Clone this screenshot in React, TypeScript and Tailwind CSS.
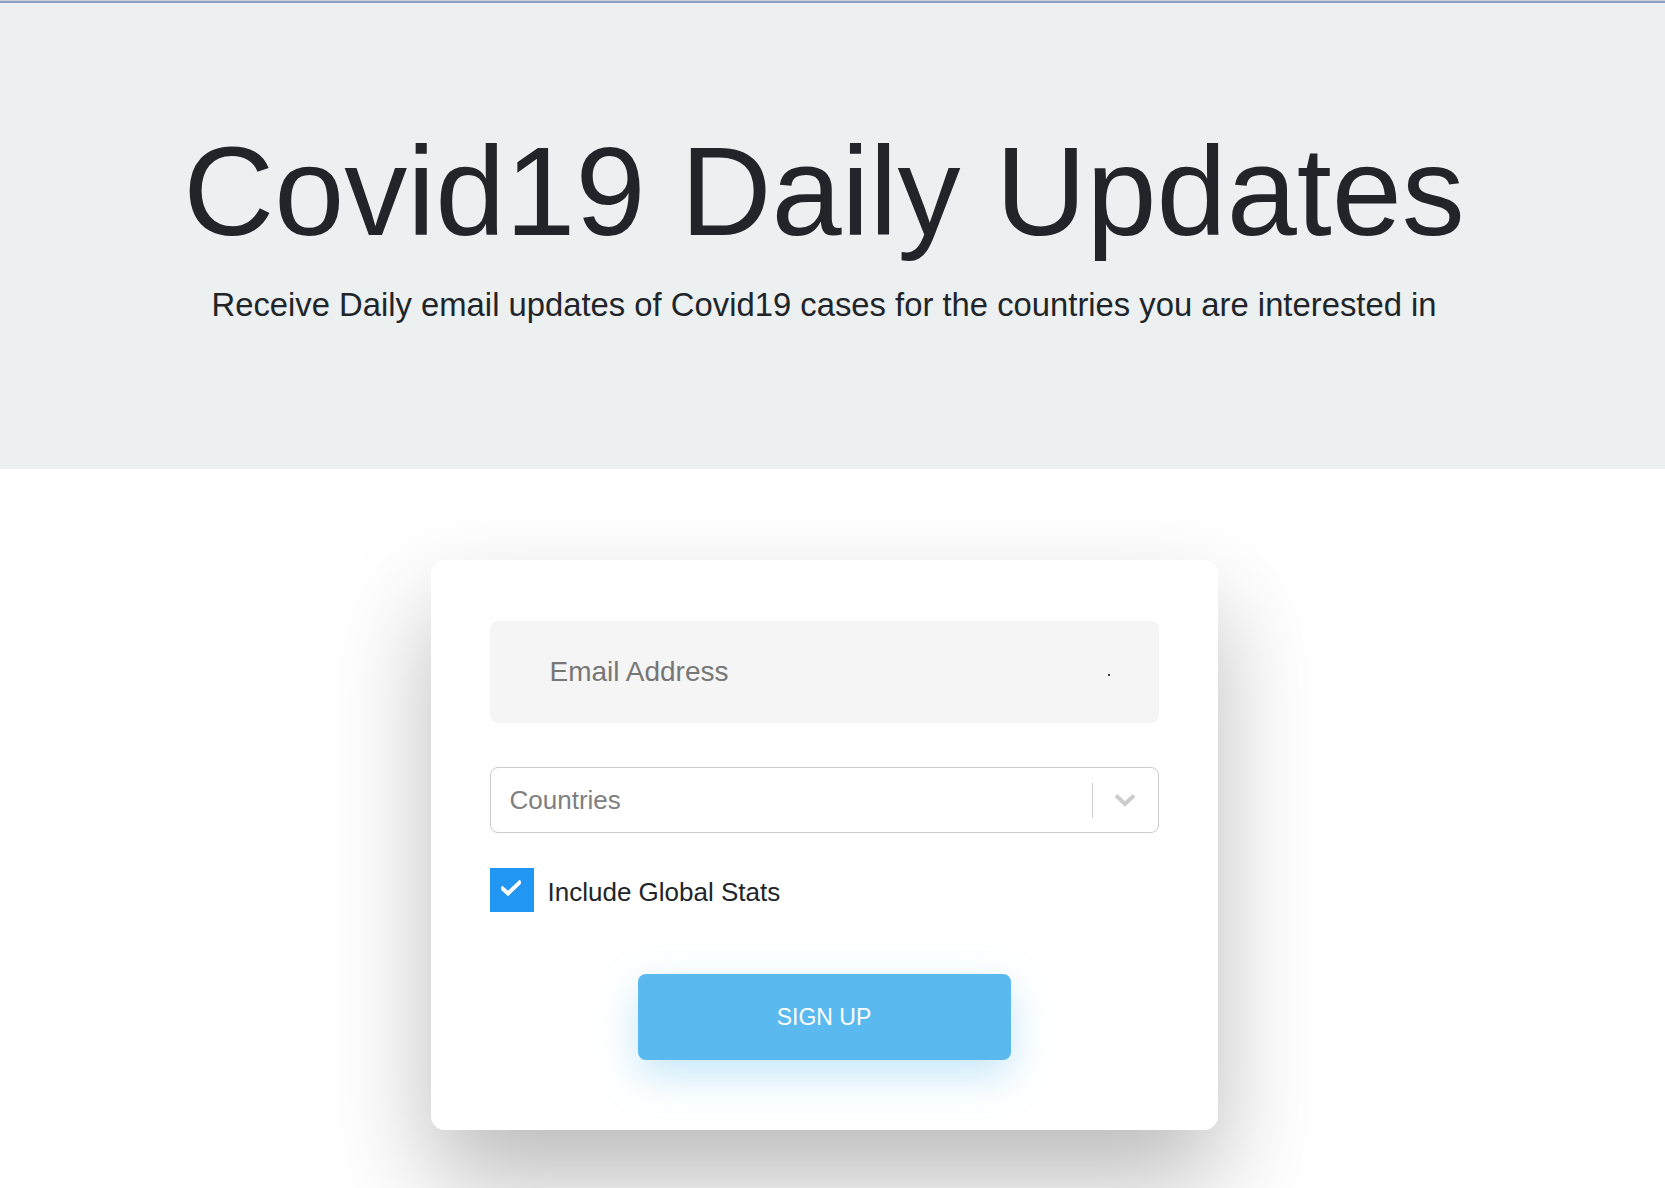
import { useState } from "react";

export default function App() {
  const [checked, setChecked] = useState(true);

  return (
    <div className="min-h-screen bg-white font-['Liberation_Sans',Arial,sans-serif] text-[#212529] overflow-hidden">
      {/* Top window line */}
      <div className="h-px bg-[#c9d0dc]" />
      <div className="h-[2px] bg-[#8ea0c2]" />

      {/* Hero */}
      <header className="h-[466px] bg-[#ecf0f1] pt-[126px] pr-[17px] text-center">
        <h1 className="text-[126px] leading-none font-normal">Covid19 Daily Updates</h1>
        <p className="mt-[34px] text-[32.8px] leading-none">
          Receive Daily email updates of Covid19 cases for the countries you are interested in
        </p>
      </header>

      {/* Signup card */}
      <main className="flex justify-center pt-[91px] pr-[17px] pb-[80px]">
        <form
          className="w-[787px] rounded-[14px] bg-white px-[59px] pt-[61px] pb-[70px] shadow-[0_50px_100px_rgba(0,0,0,0.27)]"
          onSubmit={(e) => e.preventDefault()}
        >
          <div className="relative">
            <input
              type="email"
              placeholder="Email Address"
              className="h-[102px] w-full rounded-lg bg-[#f5f5f5] pl-[60px] text-[28px] text-[#495057] outline-none placeholder:text-[#777777]"
            />
            <span className="absolute left-[618px] top-[53px] h-[2px] w-[2px] rounded-full bg-black" />
          </div>

          <div className="mt-[44px] flex h-[66px] items-center rounded-lg border border-[#cccccc] bg-white">
            <span className="flex-1 pl-[19px] text-[26px] text-[#808080]">Countries</span>
            <span className="h-[35px] w-px bg-[#cccccc]" />
            <span className="flex w-[65px] items-center justify-center">
              <svg width="22" height="14" viewBox="0 0 22 14" fill="none">
                <path d="M2 2.5 L11 11 L20 2.5" stroke="#cccccc" strokeWidth="4" strokeLinejoin="miter" />
              </svg>
            </span>
          </div>

          <label className="mt-[35px] flex items-center gap-[14px] cursor-pointer select-none">
            <span
              className={
                checked
                  ? "flex h-[44px] w-[44px] items-center justify-center bg-[#2196f3]"
                  : "flex h-[44px] w-[44px] items-center justify-center border-2 border-[#2196f3] bg-white"
              }
              onClick={() => setChecked(!checked)}
            >
              {checked && (
                <svg width="20" height="17" viewBox="0 0 20 17" className="-mt-[6px] -ml-[2px]">
                  <path d="M1.5 9.5 L7 14.5 L18.5 3.5" stroke="white" strokeWidth="4" fill="none" strokeLinecap="square" />
                </svg>
              )}
            </span>
            <span className="mt-[4px] text-[26px] leading-none">Include Global Stats</span>
          </label>

          <div className="mt-[62px] flex justify-center">
            <button
              type="submit"
              className="h-[86px] w-[373px] rounded-lg bg-[#5ab9ee] text-[23px] text-white shadow-[0_15px_40px_rgba(90,185,238,0.35)]"
            >
              SIGN UP
            </button>
          </div>
        </form>
      </main>
    </div>
  );
}
